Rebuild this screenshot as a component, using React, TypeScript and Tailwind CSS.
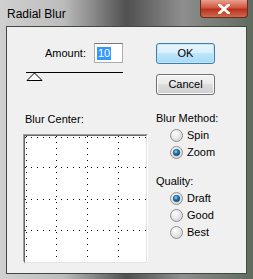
const font = "font-['Liberation_Sans',Arial,sans-serif]";

function Radio({ checked, label }: { checked?: boolean; label: string }) {
  return (
    <div className="flex h-[17px] items-center pl-[14px]">
      <svg width="13" height="13" viewBox="0 0 13 13">
        <defs>
          <radialGradient id={`rg-${label}`} cx="0.4" cy="0.35" r="0.7">
            <stop offset="0" stopColor="#ffffff" />
            <stop offset="1" stopColor="#d4d4d4" />
          </radialGradient>
          <radialGradient id={`dot-${label}`} cx="0.4" cy="0.35" r="0.7">
            <stop offset="0" stopColor="#8fd0f5" />
            <stop offset="0.5" stopColor="#1f78b4" />
            <stop offset="1" stopColor="#0d3f68" />
          </radialGradient>
        </defs>
        <circle cx="6.5" cy="6.5" r="6" fill={`url(#rg-${label})`} stroke="#8e8f8f" />
        {checked && <circle cx="6.5" cy="6.5" r="3.3" fill={`url(#dot-${label})`} stroke="#174e78" strokeWidth="0.6" />}
      </svg>
      <span className="ml-[4px] text-[11px] text-black">{label}</span>
    </div>
  );
}

function Grid() {
  return (
    <svg width="123" height="126" viewBox="0 0 123 126">
      {[1, 31, 62, 93].map((x) => (
        <line key={"v" + x} x1={x + 0.5} y1="0" x2={x + 0.5} y2="126" stroke="#000" strokeDasharray="1 5" />
      ))}
      {[1, 31, 63, 94].map((y) => (
        <line key={"h" + y} x1="0" y1={y + 0.5} x2="123" y2={y + 0.5} stroke="#000" strokeDasharray="1 5" />
      ))}
    </svg>
  );
}

export default function App() {
  return (
    <div
      className={`${font} flex h-[279px] w-[253px] flex-col bg-[linear-gradient(to_right,#d0d0d0_0%,#bcbcbc_25%,#505050_50%,#8e8e8e_72%,#5f6b5f_100%)]`}
    >
      {/* title bar */}
      <div className="flex h-[26px] shrink-0 items-start justify-between">
        <span className="pl-[7px] pt-[5px] text-[12px] text-black">Radial Blur</span>
        <div className="mr-[5px] flex h-[18px] w-[48px] items-center justify-center rounded-b-[4px] border border-t-0 border-[#6b2a1e] bg-[linear-gradient(to_bottom,#e8a090_0%,#d2553f_45%,#b8321c_55%,#d06a50_100%)]">
          <svg width="12" height="10" viewBox="0 0 12 10">
            <path d="M1.5 1 L10.5 9 M10.5 1 L1.5 9" stroke="#fff" strokeWidth="2.6" strokeLinecap="square" />
          </svg>
        </div>
      </div>

      {/* client area */}
      <div className="mx-[6px] mb-[5px] flex flex-1 border border-[#3f4a3f] bg-[#f0f0f0]">
        {/* left column */}
        <div className="flex w-[143px] flex-col pl-[16px] pt-[16px]">
          <div className="flex items-center">
            <span className="ml-[22px] text-[11px] text-black">Amount:</span>
            <div className="ml-[8px] flex h-[20px] w-[29px] items-center border border-[#abadb3] border-t-[#7a7a7a] bg-white pl-[2px]">
              <span className="bg-[#3399ff] px-px text-[11px] leading-[13px] text-white">10</span>
            </div>
          </div>
          <svg className="mt-[9px]" width="100" height="10" viewBox="0 0 100 10">
            <line x1="3" y1="0.5" x2="100" y2="0.5" stroke="#000" />
            <path d="M4 8.5 L11.5 1 L19 8.5 Z" fill="#fff" stroke="#000" />
          </svg>
          <span className="mt-[29px] pl-[2px] text-[11px] text-black">Blur Center:</span>
          <div className="mt-[6px] h-[128px] w-[125px] border border-[#a0a0a0] border-b-white border-r-white bg-white">
            <div className="border border-[#696969] border-b-[#e3e3e3] border-r-[#e3e3e3]">
              <Grid />
            </div>
          </div>
        </div>

        {/* right column */}
        <div className="flex flex-col pl-[6px] pt-[16px]">
          <button className="flex h-[21px] w-[59px] items-center justify-center rounded-[3px] border border-[#3c7fb1] bg-[linear-gradient(to_bottom,#eaf6fd_0%,#d9f0fc_45%,#bee6fd_50%,#a7d9f5_100%)] text-[11px] text-black shadow-[inset_0_0_0_1px_#c4e5f6]">
            OK
          </button>
          <button className="mt-[10px] flex h-[21px] w-[59px] items-center justify-center rounded-[3px] border border-[#707070] bg-[linear-gradient(to_bottom,#f2f2f2_0%,#ebebeb_45%,#dddddd_50%,#cfcfcf_100%)] text-[11px] text-black shadow-[inset_0_0_0_1px_#fcfcfc]">
            Cancel
          </button>
          <span className="mt-[15px] text-[11px] text-black">Blur Method:</span>
          <div className="flex flex-col">
            <Radio label="Spin" />
            <Radio label="Zoom" checked />
          </div>
          <span className="mt-[12px] text-[11px] text-black">Quality:</span>
          <div className="mt-[1px] flex flex-col">
            <Radio label="Draft" checked />
            <Radio label="Good" />
            <Radio label="Best" />
          </div>
        </div>
      </div>
    </div>
  );
}
